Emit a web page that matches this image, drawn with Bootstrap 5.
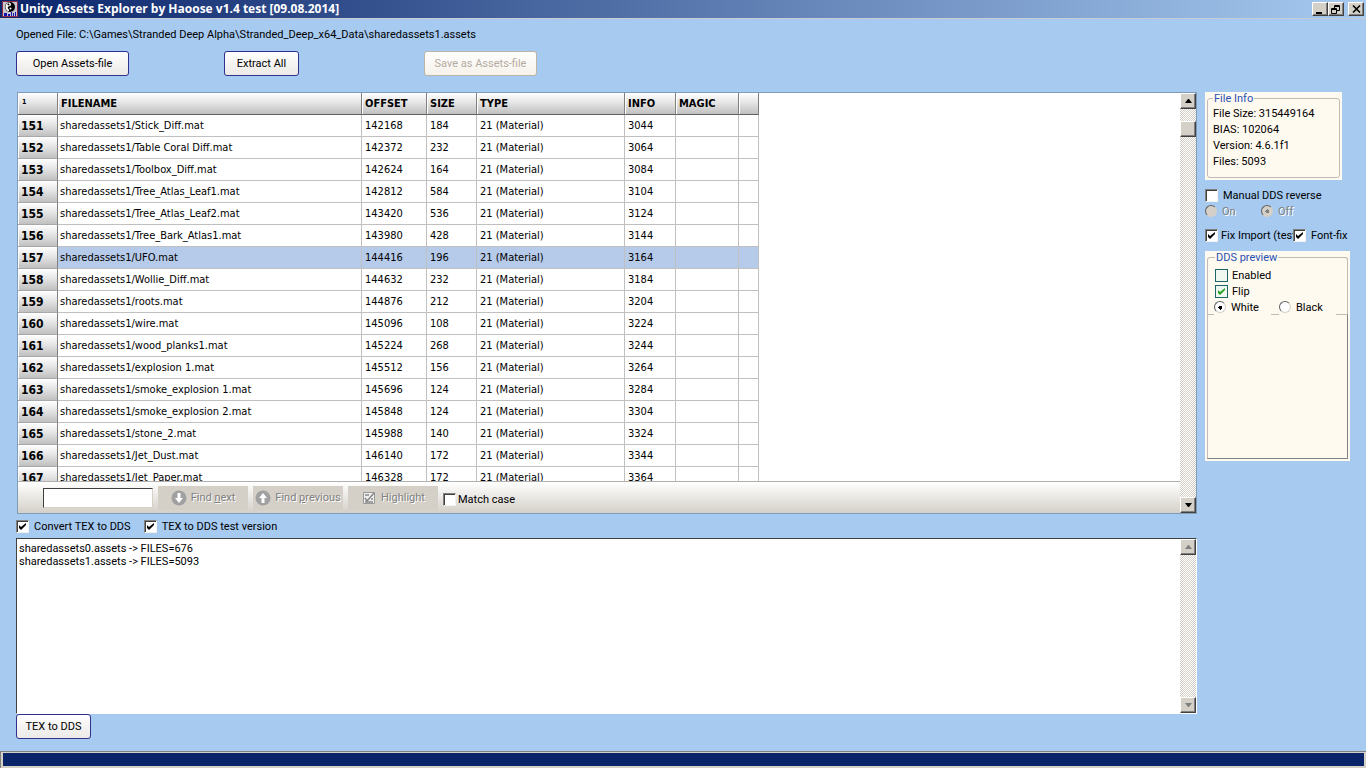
<!DOCTYPE html>
<html lang="en">
<head>
<meta charset="utf-8">
<meta name="viewport" content="width=device-width, initial-scale=1">
<title>Unity Assets Explorer by Haoose v1.4 test [09.08.2014]</title>
<link href="https://cdn.jsdelivr.net/npm/bootstrap@5.3.0/dist/css/bootstrap.min.css" rel="stylesheet">
<style>
  body { background: #a6caf0; color: #000; font: 11px/13px Roboto, "Liberation Sans", Arial, sans-serif; }
  button { font: inherit; padding: 0; color: inherit; }
  svg { display: block; flex: none; }

  /* title bar */
  .titlebar { height: 19px; padding: 0 2px; gap: 2px; background: linear-gradient(90deg, #0a246a, #a6caf0); border-bottom: 1px solid #c8ccd0; }
  .titlebar h1 { font: bold 12px/18px "Open Sans", "Noto Sans", sans-serif; color: #fff; margin: 0; }
  .bevel { background: #d4d0c8; border: 1px solid; border-color: #fff #404040 #404040 #fff; box-shadow: inset -1px -1px #808080; display: flex; align-items: center; justify-content: center; border-radius: 0; }
  .win-btn { width: 16px; height: 14px; }

  /* rounded push buttons */
  .push { height: 25px; padding: 0; color: #000; border: 1px solid #303090; border-radius: 3px; background: linear-gradient(#fff, #ece9e6); }
  .push:disabled { color: #b4aca0; border-color: #bdb4a8; background: linear-gradient(#fff, #f6f1ea); opacity: 1; }
  .w-wide { width: 113px; }
  .w-narrow { width: 75px; }
  .toolbar-main { display: grid; grid-template-columns: 208px 200px auto; height: 41px; justify-content: start; align-items: start; }
  .opened { height: 32px; padding-top: 9px; }

  /* file table */
  .frame { margin-left: 1px; border: 1px solid #7f9db9; background: #fff; }
  .viewport { height: 388px; overflow: hidden; }
  .files { width: 740px; table-layout: fixed; border-collapse: separate; border-spacing: 0; font-family: "DejaVu Sans Condensed", "Noto Sans", sans-serif; line-height: 16px; }
  .files th, .files td { height: 22px; padding: 0 3px; border-right: 1px solid #c0c0c0; border-bottom: 1px solid #c0c0c0; white-space: nowrap; overflow: hidden; vertical-align: middle; }
  .files td:nth-child(2) { padding-left: 2px; }
  .files th { font-weight: bold; background: linear-gradient(#fff, #e2e2e2 50%, #c0c0c0); border-right-color: #808080; border-bottom-color: #a8a8a8; box-shadow: inset 1px 1px #fff; }
  .files tbody th { font-size: 12px; }
  .files thead th { border-bottom-color: #606060; }
  .files tr.picked td { background: #b6cae9; }
  .files .tiny { font-size: 7px; padding-bottom: 4px; padding-left: 4px; }

  /* search strip */
  .findbar { height: 32px; padding-left: 25px; gap: 5px; border-top: 1px solid #b0b0b0; background: linear-gradient(#fff, #d4d0c8); }
  .sunken { border: 1px solid; border-color: #404040 #d4d0c8 #d4d0c8 #404040; border-radius: 0; background: #fff; }
  .findbox { width: 110px; height: 20px; font-size: 11px; }
  .tool { width: 90px; height: 24px; gap: 4px; border: 0; background: #d4d0c8; display: flex; align-items: center; justify-content: center; white-space: nowrap; }
  .tool:disabled { color: #808080; text-shadow: 1px 1px #fff; }
  .match { padding-top: 4px; gap: 2px; }

  /* classic scroll bar */
  .scroller { width: 16px; flex: none; background: repeating-conic-gradient(#fff 0 25%, #d4d0c8 0 50%) 0 0 / 2px 2px; }
  .scroller .bevel { width: 16px; height: 16px; }
  .thumb { margin-top: 12px; }

  /* check boxes and radios */
  .tick, .dot { appearance: none; margin: 0; flex: none; background: #fff center / 9px 9px no-repeat; }
  .tick { width: 13px; height: 13px; border: 1px solid; border-color: #808080 #f4f2ee #f4f2ee #808080; box-shadow: inset 1px 1px #404040; }
  .tick:checked { background-image: url("data:image/svg+xml,%3Csvg xmlns='http://www.w3.org/2000/svg' viewBox='0 0 9 9'%3E%3Cpath d='M1 3v3l2 2 5-5V1L3 5z'/%3E%3C/svg%3E"); }
  .tick.modern { border-color: #1c6468; background-color: #f0f6f0; box-shadow: none; }
  .tick.modern:checked { background-image: url("data:image/svg+xml,%3Csvg xmlns='http://www.w3.org/2000/svg' viewBox='0 0 9 9'%3E%3Cpath fill='%2321a121' d='M1 3v3l2 2 5-5V1L3 5z'/%3E%3C/svg%3E"); }
  .dot { width: 12px; height: 12px; border-radius: 50%; border: 1px solid; border-color: #606060 #d4d0c8 #d4d0c8 #606060; }
  .dot:checked { background-image: radial-gradient(circle, #000 2px, transparent 2px); }
  .dot:disabled { background-color: #d4d0c8; }
  .dot:disabled:checked { background-image: radial-gradient(circle, #808080 2px, transparent 2px); }
  label { display: flex; align-items: center; white-space: nowrap; }
  .off label { color: #808080; text-shadow: 1px 1px #fff; }
  .converts { height: 24px; gap: 13px; }
  .converts label, .options label, .shade label { gap: 5px; }

  /* side column */
  .side { width: 145px; flex: none; }
  .sheet { background: #fffaf0; padding: 0 2px 2px; }
  .sheet fieldset { border: 1px solid #c0bcb4; border-radius: 3px; padding: 0 5px; margin: 0; }
  .sheet legend { float: none; width: auto; margin: 0; padding: 0 1px; font-size: 11px; line-height: 13px; color: #2850b0; }
  .facts { line-height: 16px; padding-top: 1px; height: 72px; }
  .info-sheet { width: 137px; }
  .options { padding-top: 7px; height: 71px; }
  .row-a { height: 16px; }
  .radio-cell { width: 56px; }
  .fixes { padding-top: 10px; }
  .options .fix-cell { width: 88px; gap: 3px; }
  .sheet .preview-set { padding: 0 7px; border-bottom: 0; border-radius: 3px 3px 0 0; }
  .preview-rows { padding-top: 3px; }
  .shade { position: relative; margin: 0 -1px -1px; }
  .shade label { background: #fffaf0; width: 57px; height: 16px; }
  .canvas { height: 145px; border: 1px solid; border-color: #c0bcb4 #808080 #808080 #c0bcb4; }

  .log { min-height: 120px; border: 1px solid; border-color: #404040 #fff #fff #404040; background: #fff; }
  .log textarea { border: 0; resize: none; padding: 3px 2px; line-height: 13px; overflow: hidden; outline: 0; color: #000; }
  .foot { height: 37px; }
  .statusbar { height: 17px; padding: 1px 2px 2px; border: 1px solid #808080; border-width: 1px 0 0 1px; background: #d4d0c8; }
  .statusbar div { background: #0a246a; }
</style>
</head>
<body class="d-flex flex-column min-vh-100">
<header class="titlebar d-flex align-items-center">
  <svg width="16" height="16" viewBox="0 0 16 16" aria-hidden="true"><path fill="#c8c4cc" stroke="#902848" d="M.5.5h15v15H.5z"/><circle cx="8" cy="6" r="5"/><path fill="#fff" d="M7 1.500C2 3 3 9 6 10c2 .5 1-1.500 0-2.500C5 6 7 5 8 5s2-3-1-3.500z"/><circle cx="8.500" cy="7.500" r="1" fill="#fff"/><circle cx="6.500" cy="3.500" r="1"/><path fill="#1414b0" d="M2 12h3v3H2zm4 1h2v2H6zM9 11h1v4H9zm2 1h1v3h-1zm2-1h1v4h-1z"/></svg>
  <h1 class="flex-grow-1 text-nowrap">Unity Assets Explorer by Haoose v1.4 test [09.08.2014]</h1>
  <div class="d-flex">
    <button class="bevel win-btn" aria-label="Minimize"><svg width="10" height="9"><path d="M1 7h6v2H1z"/></svg></button>
    <button class="bevel win-btn me-1" aria-label="Restore"><svg width="10" height="9"><path fill="none" stroke="#000" d="M3.500 3V.5h5v5H6M3 1.500h6M.5 3.500h5v5h-5zM0 4.500h6"/></svg></button>
    <button class="bevel win-btn" aria-label="Close"><svg width="9" height="8"><path fill="none" stroke="#000" stroke-width="1.600" d="M1 .5l7 7M8 .5l-7 7"/></svg></button>
  </div>
</header>

<div class="px-3">
  <div class="opened">Opened File: C:\Games\Stranded Deep Alpha\Stranded_Deep_x64_Data\sharedassets1.assets</div>
  <div class="toolbar-main">
    <div><button class="push w-wide">Open Assets-file</button></div>
    <div><button class="push w-narrow">Extract All</button></div>
    <div><button class="push w-wide" disabled>Save as Assets-file</button></div>
  </div>
</div>

<main class="d-flex flex-grow-1 gap-2 px-3">
  <div class="d-flex flex-column flex-grow-1">
    <section class="frame d-flex">
      <div class="flex-grow-1">
        <div class="viewport">
          <table class="files">
            <colgroup><col style="width:40px"><col style="width:304px"><col style="width:65px"><col style="width:50px"><col style="width:148px"><col style="width:51px"><col style="width:63px"><col style="width:20px"></colgroup>
            <thead><tr><th class="tiny">1</th><th>FILENAME</th><th>OFFSET</th><th>SIZE</th><th>TYPE</th><th>INFO</th><th>MAGIC</th><th></th></tr></thead>
            <tbody>
              <tr><th>151</th><td>sharedassets1/Stick_Diff.mat</td><td>142168</td><td>184</td><td>21 (Material)</td><td>3044</td><td></td><td></td></tr>
              <tr><th>152</th><td>sharedassets1/Table Coral Diff.mat</td><td>142372</td><td>232</td><td>21 (Material)</td><td>3064</td><td></td><td></td></tr>
              <tr><th>153</th><td>sharedassets1/Toolbox_Diff.mat</td><td>142624</td><td>164</td><td>21 (Material)</td><td>3084</td><td></td><td></td></tr>
              <tr><th>154</th><td>sharedassets1/Tree_Atlas_Leaf1.mat</td><td>142812</td><td>584</td><td>21 (Material)</td><td>3104</td><td></td><td></td></tr>
              <tr><th>155</th><td>sharedassets1/Tree_Atlas_Leaf2.mat</td><td>143420</td><td>536</td><td>21 (Material)</td><td>3124</td><td></td><td></td></tr>
              <tr><th>156</th><td>sharedassets1/Tree_Bark_Atlas1.mat</td><td>143980</td><td>428</td><td>21 (Material)</td><td>3144</td><td></td><td></td></tr>
              <tr class="picked"><th>157</th><td>sharedassets1/UFO.mat</td><td>144416</td><td>196</td><td>21 (Material)</td><td>3164</td><td></td><td></td></tr>
              <tr><th>158</th><td>sharedassets1/Wollie_Diff.mat</td><td>144632</td><td>232</td><td>21 (Material)</td><td>3184</td><td></td><td></td></tr>
              <tr><th>159</th><td>sharedassets1/roots.mat</td><td>144876</td><td>212</td><td>21 (Material)</td><td>3204</td><td></td><td></td></tr>
              <tr><th>160</th><td>sharedassets1/wire.mat</td><td>145096</td><td>108</td><td>21 (Material)</td><td>3224</td><td></td><td></td></tr>
              <tr><th>161</th><td>sharedassets1/wood_planks1.mat</td><td>145224</td><td>268</td><td>21 (Material)</td><td>3244</td><td></td><td></td></tr>
              <tr><th>162</th><td>sharedassets1/explosion 1.mat</td><td>145512</td><td>156</td><td>21 (Material)</td><td>3264</td><td></td><td></td></tr>
              <tr><th>163</th><td>sharedassets1/smoke_explosion 1.mat</td><td>145696</td><td>124</td><td>21 (Material)</td><td>3284</td><td></td><td></td></tr>
              <tr><th>164</th><td>sharedassets1/smoke_explosion 2.mat</td><td>145848</td><td>124</td><td>21 (Material)</td><td>3304</td><td></td><td></td></tr>
              <tr><th>165</th><td>sharedassets1/stone_2.mat</td><td>145988</td><td>140</td><td>21 (Material)</td><td>3324</td><td></td><td></td></tr>
              <tr><th>166</th><td>sharedassets1/Jet_Dust.mat</td><td>146140</td><td>172</td><td>21 (Material)</td><td>3344</td><td></td><td></td></tr>
              <tr><th>167</th><td>sharedassets1/Jet_Paper.mat</td><td>146328</td><td>172</td><td>21 (Material)</td><td>3364</td><td></td><td></td></tr>
            </tbody>
          </table>
        </div>
        <div class="findbar d-flex align-items-center">
          <input class="sunken findbox" type="text" aria-label="Find">
          <button class="tool" disabled><svg width="16" height="16" viewBox="0 0 16 16"><circle cx="8" cy="8" r="7.500" fill="#a0a0a0"/><path fill="#fff" d="M6.500 3h3v5H12l-4 5-4-5h2.500z"/></svg><span>Find <u>n</u>ext</span></button>
          <button class="tool" disabled><svg width="16" height="16" viewBox="0 0 16 16"><circle cx="8" cy="8" r="7.500" fill="#a0a0a0"/><path fill="#fff" d="M6.500 13h3V8H12L8 3 4 8h2.500z"/></svg><span>Find <u>p</u>revious</span></button>
          <button class="tool" disabled><svg width="16" height="16" viewBox="0 0 16 16"><path fill="#eee" stroke="#999" d="M2.500 2.500h11v11h-11z"/><path fill="none" stroke="#888" stroke-width="1.500" d="M4 5h4M4 8l2 3 7-8M4 12h8M10 9h2"/></svg><span>Highlight</span></button>
          <label class="match"><input class="tick" type="checkbox">Match case</label>
        </div>
      </div>
      <div class="scroller d-flex flex-column">
        <button class="bevel" aria-label="Scroll up"><svg width="7" height="4"><path d="M3 0h1l3 4H0z"/></svg></button>
        <div class="bevel thumb"></div>
        <button class="bevel mt-auto" aria-label="Scroll down"><svg width="7" height="4"><path d="M0 0h7L4 4H3z"/></svg></button>
      </div>
    </section>

    <div class="d-flex align-items-center converts">
      <label><input class="tick" type="checkbox" checked>Convert TEX to DDS</label>
      <label><input class="tick" type="checkbox" checked>TEX to DDS test version</label>
    </div>

    <section class="log d-flex flex-grow-1">
      <textarea class="flex-grow-1" aria-label="Log">sharedassets0.assets -> FILES=676
sharedassets1.assets -> FILES=5093</textarea>
      <div class="scroller d-flex flex-column">
        <button class="bevel" aria-label="Scroll log up"><svg width="7" height="4"><path fill="#808080" d="M3 0h1l3 4H0z"/></svg></button>
        <button class="bevel mt-auto" aria-label="Scroll log down"><svg width="7" height="4"><path fill="#808080" d="M0 0h7L4 4H3z"/></svg></button>
      </div>
    </section>
    <div class="foot"><button class="push w-narrow">TEX to DDS</button></div>
  </div>

  <aside class="side">
    <div class="sheet info-sheet">
      <fieldset>
        <legend>File Info</legend>
        <div class="facts">File Size: 315449164<br>BIAS: 102064<br>Version: 4.6.1f1<br>Files: 5093</div>
      </fieldset>
    </div>
    <div class="options">
      <label class="row-a"><input class="tick" type="checkbox">Manual DDS reverse</label>
      <div class="d-flex off row-a">
        <label class="radio-cell"><input class="dot" type="radio" name="reverse" disabled>On</label>
        <label><input class="dot" type="radio" name="reverse" disabled checked>Off</label>
      </div>
      <div class="d-flex fixes">
        <label class="fix-cell"><input class="tick" type="checkbox" checked>Fix Import (test)</label>
        <label><input class="tick" type="checkbox" checked>Font-fix</label>
      </div>
    </div>
    <div class="sheet">
      <fieldset class="preview-set">
        <legend>DDS preview</legend>
        <div class="preview-rows">
          <label class="row-a gap-1"><input class="tick modern" type="checkbox">Enabled</label>
          <label class="row-a gap-1"><input class="tick modern" type="checkbox" checked>Flip</label>
          <div class="d-flex shade gap-2">
            <label><input class="dot" type="radio" name="shade" checked>White</label>
            <label><input class="dot" type="radio" name="shade">Black</label>
          </div>
        </div>
      </fieldset>
      <div class="canvas"></div>
    </div>
  </aside>
</main>
<footer class="statusbar d-flex"><div class="flex-grow-1"></div></footer>
<script src="https://cdn.jsdelivr.net/npm/bootstrap@5.3.0/dist/js/bootstrap.bundle.min.js"></script>
</body>
</html>
